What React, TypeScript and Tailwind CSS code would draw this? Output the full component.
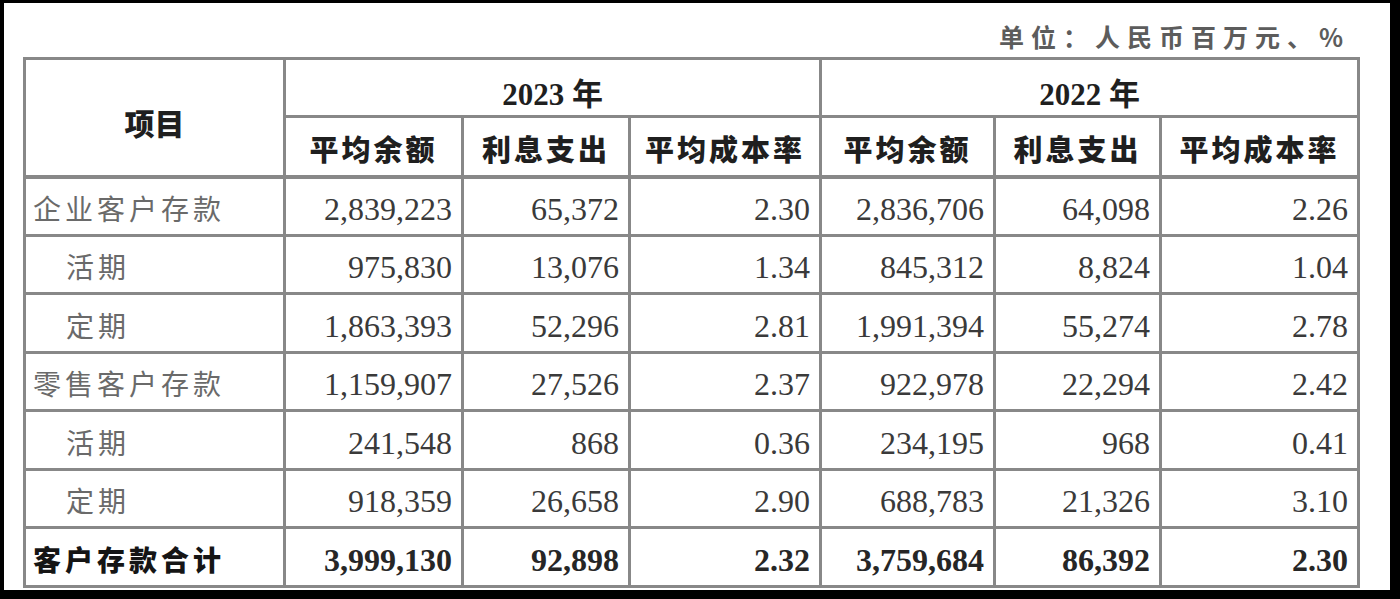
const rows = [
  { label: '企业客户存款', sub: false, v: ['2,839,223', '65,372', '2.30', '2,836,706', '64,098', '2.26'] },
  { label: '活期', sub: true, v: ['975,830', '13,076', '1.34', '845,312', '8,824', '1.04'] },
  { label: '定期', sub: true, v: ['1,863,393', '52,296', '2.81', '1,991,394', '55,274', '2.78'] },
  { label: '零售客户存款', sub: false, v: ['1,159,907', '27,526', '2.37', '922,978', '22,294', '2.42'] },
  { label: '活期', sub: true, v: ['241,548', '868', '0.36', '234,195', '968', '0.41'] },
  { label: '定期', sub: true, v: ['918,359', '26,658', '2.90', '688,783', '21,326', '3.10'] },
];

const total = ['3,999,130', '92,898', '2.32', '3,759,684', '86,392', '2.30'];

const cjk = "font-['Noto_Sans_CJK_SC',sans-serif]";
const serif = "font-['Liberation_Serif','Noto_Sans_CJK_SC',serif]";
const cell = 'border-[3px] border-[#888888]';
const subHeads = ['平均余额', '利息支出', '平均成本率'];

export default function App() {
  return (
    <div className="w-[1400px] h-[599px] bg-black pt-[3px] pl-[4px] pr-[10px] pb-[9px]">
      <div className="h-full bg-white overflow-hidden">
        <div className={`h-[54px] pt-[21px] pr-[40px] text-right text-[25px] leading-none font-bold text-[#5c5c5c] tracking-[7px] ${cjk}`}>
          单位：人民币百万元、%
        </div>
        <table className="table-fixed border-collapse ml-[19px]">
          <colgroup>
            <col className="w-[260px]" />
            <col className="w-[178px]" />
            <col className="w-[167px]" />
            <col className="w-[191px]" />
            <col className="w-[174px]" />
            <col className="w-[166px]" />
            <col className="w-[198px]" />
          </colgroup>
          <thead>
            <tr className="h-[58px]">
              <th rowSpan={2} className={`${cell} border-b-[4px] text-[30px] font-black text-[#1f1f1f] pt-[10px] ${cjk}`}>
                项目
              </th>
              <th colSpan={3} className={`${cell} text-[31px] leading-none font-bold text-[#1f1f1f] pt-[10px] ${serif}`}>
                2023 <span className={cjk}>年</span>
              </th>
              <th colSpan={3} className={`${cell} text-[31px] leading-none font-bold text-[#1f1f1f] pt-[10px] ${serif}`}>
                2022 <span className={cjk}>年</span>
              </th>
            </tr>
            <tr className="h-[60px]">
              {[...subHeads, ...subHeads].map((h, i) => (
                <th key={i} className={`${cell} border-b-[4px] text-[29px] font-black text-[#1f1f1f] tracking-[3px] pt-[4px] ${cjk}`}>
                  {h}
                </th>
              ))}
            </tr>
          </thead>
          <tbody>
            {rows.map((r, i) => (
              <tr key={i} className="h-[58.5px]">
                <td
                  className={`${cell} text-left text-[28px] text-[#6a6a6a] tracking-[4px] pt-[4px] ${r.sub ? 'pl-[40px]' : 'pl-[7px]'} ${cjk}`}
                >
                  {r.label}
                </td>
                {r.v.map((n, j) => (
                  <td key={j} className={`${cell} text-right pr-[9px] pt-[6px] text-[32px] text-[#3a3a3a] ${serif}`}>
                    {n}
                  </td>
                ))}
              </tr>
            ))}
            <tr className="h-[59px]">
              <td className={`${cell} text-left pl-[7px] pt-[4px] text-[28px] font-black text-[#151515] tracking-[4px] ${cjk}`}>
                客户存款合计
              </td>
              {total.map((n, j) => (
                <td key={j} className={`${cell} text-right pr-[9px] pt-[6px] text-[32px] font-bold text-[#262626] ${serif}`}>
                  {n}
                </td>
              ))}
            </tr>
          </tbody>
        </table>
      </div>
    </div>
  );
}
